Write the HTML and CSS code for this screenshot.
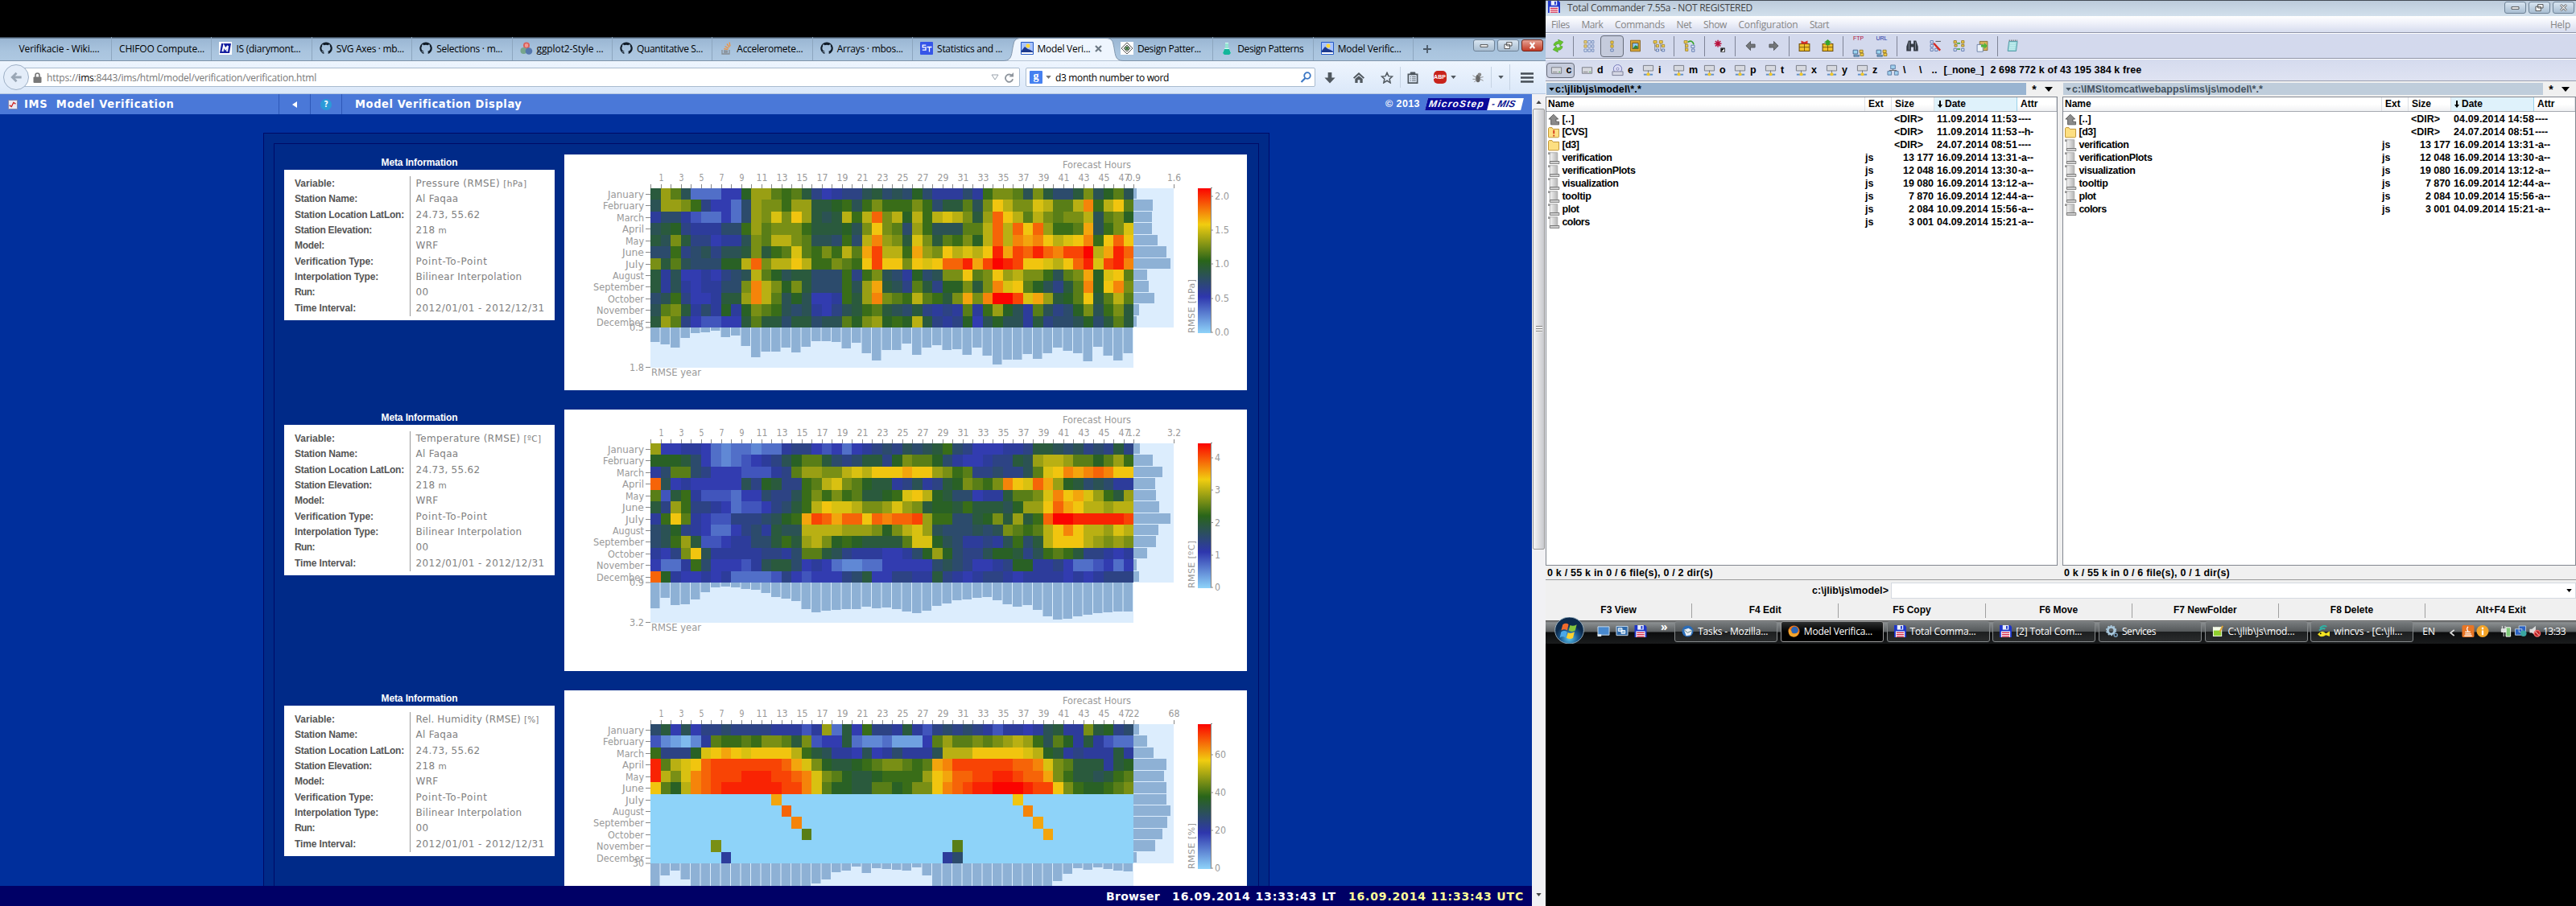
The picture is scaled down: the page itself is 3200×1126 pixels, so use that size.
FILE: index.html
```html
<!DOCTYPE html>
<html lang="en">
<head>
<meta charset="utf-8">
<title>IMS Model Verification</title>
<link rel="stylesheet" href="styles.css">
</head>
<body>
<svg class="defs" aria-hidden="true">
  <defs>
    <linearGradient id="scale" x1="0" y1="1" x2="0" y2="0">
      <stop offset="0" stop-color="#8ed3f9"/><stop offset=".25" stop-color="#2e36ad"/>
      <stop offset=".5" stop-color="#296519"/><stop offset=".75" stop-color="#f1cd10"/><stop offset="1" stop-color="#fb0300"/>
    </linearGradient>
    <linearGradient id="grey" x2="1"><stop stop-color="#f5f5f5"/><stop offset="1" stop-color="#b5b5b5"/></linearGradient>
    <radialGradient id="orb" cy=".8"><stop stop-color="#5fc8ee"/><stop offset=".6" stop-color="#1c5c93"/><stop offset="1" stop-color="#0c2a4c"/></radialGradient>
    <symbol id="github" viewBox="0 0 16 16"><path fill="#111c28" fill-rule="evenodd" d="M8 .5a7.5 7.5 0 0 0-2.6 14.6V13c-2 .4-2.700-.9-3-1.600 1.200 0 1.300 1 2 1 .5 0 .9-.2 1.100-.9C3.500 11.200 2.400 9.900 2.400 7.700c0-1 .3-1.600.8-2.200-.2-.8-.1-1.600.2-2.200.9.1 1.600.5 2.200.9a8 8 0 0 1 4.800 0c.6-.4 1.300-.8 2.200-.9.3.6.4 1.400.2 2.200.5.6.8 1.200.8 2.200 0 2.200-1.100 3.500-3.100 3.800.1.4.2.8.2 1.400v2.200A7.500 7.500 0 0 0 8 .5z"/></symbol>
    <symbol id="ms" viewBox="0 0 16 16"><path fill="#fff" d="M0 0h16v16H0z"/><path fill="#1620a0" d="M3 2h12l-2 12H1z"/><path fill="none" stroke="#fff" stroke-width="2" d="M4.500 12 6 5l2 4 3-4-1 7"/></symbol>
    <symbol id="cubes" viewBox="0 0 16 16"><circle cx="8" cy="4.500" r="4" fill="#d9605b"/><circle cx="4.500" cy="11" r="4" fill="#76a58c"/><circle cx="11" cy="11.500" r="4.300" fill="#5577ad"/><path d="M6 3l2-1 2 1v3L8 7 6 6z" fill="#f19a92"/></symbol>
    <symbol id="stack" viewBox="0 0 16 16"><path d="M3 10v5h9v-5M5 13h5M5 11l5 .4" fill="none" stroke="#858b91" stroke-width="1.300"/><path d="M5.300 8.500l5 1.200M6.500 5.500l4.500 2.600M9 2.500l3 4.200M12 .5l1 5" stroke="#ef9340" stroke-width="1.300"/></symbol>
    <symbol id="st" viewBox="0 0 16 16"><rect width="16" height="16" rx="1" fill="#3555e8"/><path d="M7.300 4.200H3.200v2.600h3.800v3.400H2.800M8.500 6.500h6M11.500 6.500v6" fill="none" stroke="#fff" stroke-width="1.300"/></symbol>
    <symbol id="hill" viewBox="0 0 16 16"><path fill="#a9c4ff" stroke="#2459c4" d="M.5.5h15v15H.5z"/><circle cx="9" cy="5" r="2.500" fill="#ffd83c"/><path fill="#1d3a8e" d="M1 11l4-5 4 3 3 1 3 2v1H1z"/><path fill="#fff" d="M1 13h14v2H1z"/></symbol>
    <symbol id="diamond" viewBox="0 0 16 16"><path fill="#fff" d="M0 0h16v16H0z"/><path d="M8 1l7 7-7 7-7-7zM8 4l4 4-4 4-4-4z" fill="none" stroke="#555"/><circle cx="8" cy="8" r="2.500" fill="#4b7b4b"/></symbol>
    <symbol id="flask" viewBox="0 0 16 16"><path d="M6 1v6l-3 6q0 2 2 2h6q2 0 2-2l-3-6V1" fill="#d8fff4"/><path d="M5 9h6l2 5-2 2H5l-2-2z" fill="#13b69a"/><path d="M6 3h4M6 5h4M6 7h4" stroke="#53c9b2"/></symbol>
    <symbol id="floppy" viewBox="0 0 16 16"><path fill="#1e35c9" d="M0 0h14l2 2v14H0z"/><path fill="#e9eefb" d="M4 0h8v6H4z"/><path fill="#1e35c9" d="M8.500 1h2v4h-2z"/><path fill="#fff" d="M2 8h12v8H2z"/><path d="M3 10h10M3 12.500h10M3 15h10" stroke="#cf2046" stroke-width="1.300"/></symbol>
    <symbol id="up" viewBox="0 0 16 16"><path fill="#8b8b8b" stroke="#555" d="M7.500 1L14 7.500h-3V11h4v4H4V7.500H1z"/></symbol>
    <symbol id="dir" viewBox="0 0 16 16"><path fill="#fddf81" stroke="#b98a25" d="M.5 14V2.500l1-1h4l1.500 2h8V14l-1 1h-13z"/></symbol>
    <symbol id="warn" viewBox="0 0 16 16"><use href="#dir"/><path d="M8 5v5M8 11.500v2" stroke="#d3341a" stroke-width="2"/></symbol>
    <symbol id="js" viewBox="0 0 16 16"><path fill="url(#grey)" stroke="#aaa" d="M2.500.5h10.500v12H2.500z"/><path fill="#999" d="M0 0h3v3H0z"/><path fill="#ddd" stroke="#666" d="M2.500 12.500h13v3h-13z"/></symbol>
    <symbol id="tree1" viewBox="0 0 20 20"><g fill="#f0d57c" stroke="#8a6d16" stroke-width=".7"><path d="M3 2h4v4H3zM3 8.500h4v4H3z"/></g><g fill="#dfe7f4" stroke="#4664a5" stroke-width=".8"><path d="M9 2h4v4H9zM15 2h3v4h-3zM9 8.500h4v4H9zM3 15h4v4H3zM9 15h4v4H9zM15 8.500h3v4h-3zM15 15h3v4h-3z"/></g></symbol>
    <symbol id="tree2" viewBox="0 0 20 20"><g fill="#f2cd45" stroke="#8a6d16" stroke-width=".8"><path d="M8 2.500h4v4H8zM8 8.500h4v4H8z"/></g><path d="M8 15h4v3.500H8z" fill="#dfe7f4" stroke="#4664a5"/></symbol>
    <symbol id="pic" viewBox="0 0 20 20"><path fill="#d8a635" stroke="#7a5510" d="M2.500 1.500h15v17h-15z"/><path fill="#8cc6ef" stroke="#5b3f0c" d="M5.500 5.500h9v9h-9z"/><path fill="#2e8934" d="M6 14l4-5 4 2v3z"/></symbol>
    <symbol id="tree3" viewBox="0 0 20 20"><path d="M4 5v12h3M13 5v12h3M4 10h3M13 10h3" fill="none" stroke="#777"/><g fill="#f2cd45" stroke="#8a6d16" stroke-width=".8"><path d="M2 2h5v4H2zM11 2h5v4h-5zM6 8h4v4H6zM15 8h4v4h-4z"/></g><path d="M6 15h4v3.500H6zM15 15h4v3.500h-4z" fill="#dfe7f4" stroke="#4664a5"/></symbol>
    <symbol id="swap" viewBox="0 0 20 20"><path d="M4 4v13M4 10h4" fill="none" stroke="#777"/><path d="M2 2h5v4H2zM4 8h4v4H4zM4 14h4v4H4z" fill="#f2cd45" stroke="#8a6d16" stroke-width=".8"/><path d="M13 9h5v4h-5zM14 15h4v4h-4z" fill="#dfe7f4" stroke="#4664a5"/><path d="M8 4q7-4 9 4" fill="none" stroke="#37a32c" stroke-width="2"/></symbol>
    <symbol id="star8" viewBox="0 0 20 20"><path d="M7 1v11M1.500 6.500h11M3 2.500l8 8M11 2.500l-8 8" stroke="#b8123f" stroke-width="2"/><path fill="#fff" stroke="#111" d="M11.500 13.500h6v6h-6z"/><path d="M12 14h5l-5 5z"/></symbol>
    <symbol id="left" viewBox="0 0 20 20"><path fill="#737679" stroke="#4b4e50" d="M3 10l7-7v4.500h7v5h-7V17z"/></symbol>
    <symbol id="box" viewBox="0 0 20 20"><path fill="#efc12d" stroke="#6d4c08" stroke-width="1.300" d="M2 7h16v11H2z"/><path d="M2 12h16M10 7v11" stroke="#6d4c08"/></symbol>
    <symbol id="pack" viewBox="0 0 20 20"><use href="#box"/><path fill="#d5322b" d="M5 2l5 2 5-2v5H5z"/></symbol>
    <symbol id="unpack" viewBox="0 0 20 20"><use href="#box"/><path fill="#37a32c" d="M10 0l6 5h-3v4H7V5H4z"/></symbol>
    <symbol id="pcs" viewBox="0 0 20 20"><g fill="#9bd4ef" stroke="#31527c"><path d="M2 9h7v6H2zM3 17h8v2H3z"/></g><path d="M12 9h5v4h-5zM13 14h5v4h-5z" fill="#f2cd45" stroke="#8a6d16"/></symbol>
    <symbol id="binoc" viewBox="0 0 20 20"><path fill="#353b45" d="M4 2h4v5h4V2h4l3 9v7h-7v-6H8v6H1v-7z"/><path stroke="#8f98a6" d="M5 4v12M15 4v12"/></symbol>
    <symbol id="ren" viewBox="0 0 20 20"><path d="M2 2h4v4H2zM2 8h4v4H2zM2 14h4v4H2zM9 14h4v4H9z" fill="#dfe7f4" stroke="#4664a5"/><path d="M7 6l10 11" stroke="#d42a22" stroke-width="3"/><path d="M10 3h8" stroke="#333"/></symbol>
    <symbol id="sync" viewBox="0 0 20 20"><path d="M2 2h4v4H2zM14 2h4v4h-4zM3 8h4v3H3zM14 8h4v3h-4z" fill="#f2cd45" stroke="#8a6d16"/><path d="M7 6h5M12 15H7" stroke="#37a32c" stroke-width="2"/><path d="M2 14h4v4H2zM14 14h4v4h-4z" fill="#dfe7f4" stroke="#4664a5"/></symbol>
    <symbol id="paste" viewBox="0 0 20 20"><path d="M6 3h12v14H6z" fill="#d8b158" stroke="#7a5d1e"/><path d="M2 8h9v11H2z" fill="#edf3fb" stroke="#5c719b"/><path d="M8 8h5V5l5 5-5 5v-3H8z" fill="#50b53d"/></symbol>
    <symbol id="note" viewBox="0 0 20 20"><path d="M4 3h13l-2 15H2z" fill="#9edbdd" stroke="#3c8b97"/><path d="M5 6h9M5 9h9M4.500 12h9M4 15h9" stroke="#e7ffff"/><path d="M4 1.500h13" stroke="#777" stroke-width="2" stroke-dasharray="1.500"/></symbol>
    <symbol id="cycle" viewBox="0 0 20 20"><path d="M3 9q1-6 8-6l-1-3 8 4-5 6-.8-3Q7 6 6 10zM17 11q-1 6-8 6l1 3-8-4 5-6 .8 3q5.200 1 6.200-3z" fill="#66c62b" stroke="#348c14" stroke-width=".6"/></symbol>
    <symbol id="hdd" viewBox="0 0 16 16"><path d="M1.500 4h13v8h-13z" fill="#d7d9df" stroke="#777b84"/><path d="M3 10h6" stroke="#888"/><path d="M11 10h2" stroke="#3aa33a"/></symbol>
    <symbol id="cd" viewBox="0 0 16 16"><circle cx="8" cy="6" r="5.500" fill="#dcdcf5" stroke="#7277b5"/><circle cx="8" cy="6" r="1.500" fill="#fff" stroke="#7277b5"/><path d="M1 9.500h14v5H1z" fill="#d5d7e4" stroke="#777b94"/></symbol>
    <symbol id="netd" viewBox="0 0 16 16"><path d="M1.500 1.500h13v7h-13z" fill="#d7d9df" stroke="#777b84"/><path d="M8 8v5" stroke="#777"/><path d="M2 13.500h12" stroke="#5d8ec9" stroke-width="2"/><circle cx="8" cy="13" r="2.200" fill="#f0c72c"/></symbol>
    <symbol id="net" viewBox="0 0 16 16"><path d="M5 1h6v5H5zM1 9h5v5H1zM10 9h5v5h-5z" fill="#9fd0ee" stroke="#5c7ba3"/><path d="M8 6v2M3 8h10" stroke="#666"/></symbol>
    <symbol id="chev" viewBox="0 0 10 6"><path d="M0 0h10L5 6z"/></symbol>
    <symbol id="tb" viewBox="0 0 16 16"><circle cx="8" cy="8" r="7.500" fill="#2a6cb8"/><path d="M3 6l6-2 5 3-2 6-6 1z" fill="#e8eef5"/><path d="M3 6l5 4 6-3" fill="none" stroke="#577"/></symbol>
    <symbol id="fox" viewBox="0 0 16 16"><circle cx="8" cy="8" r="7.500" fill="#ec7419"/><circle cx="9" cy="6.500" r="4.700" fill="#2c65b4"/><path d="M1 5q4 1 4 5 4 3 9-1-1 7-7 6.500Q0 15 1 5" fill="#f3a62d"/></symbol>
    <symbol id="gear" viewBox="0 0 16 16"><circle cx="7" cy="7" r="4.500" fill="none" stroke="#a9c8dd" stroke-width="3" /><circle cx="7" cy="7" r="6.300" fill="none" stroke="#a9c8dd" stroke-width="1.500" stroke-dasharray="2"/><circle cx="13" cy="13" r="2.200" fill="none" stroke="#7ba0bd" stroke-width="1.500"/></symbol>
    <symbol id="npp" viewBox="0 0 16 16"><path d="M1 2h12v13H1z" fill="#f5fbe8"/><path d="M2 7h10v7H2z" fill="#8fcf2e"/><path d="M2 2h10" stroke="#555" stroke-dasharray="1"/><path d="M14 1l-4 8" stroke="#e0a32e" stroke-width="2"/></symbol>
    <symbol id="fish" viewBox="0 0 16 16"><path d="M3 4q5-5 9-2M2 7q5-4 8-2" fill="none" stroke="#2fb2a5" stroke-width="2"/><path d="M0 12q6-7 11-1l5-3v7l-5-2q-6 5-11-1" fill="#f4e322"/><circle cx="4" cy="11" r="1"/></symbol>
  </defs>
</svg>

<section class="browser">
  <div class="tabs" id="tabs"></div>
  <div class="caption">
    <span class="cap"><svg viewBox="0 0 14 10"><path d="M2 4h10v3H2z" fill="#fff" stroke="#444"/></svg></span>
    <span class="cap"><svg viewBox="0 0 14 10"><path d="M5 .5h7v5H5zM2 3.500h7v6H2z" fill="#fff" stroke="#444"/></svg></span>
    <span class="cap red"><svg viewBox="0 0 14 10"><path d="M4 1l6 8M10 1L4 9" stroke="#fff" stroke-width="2.500"/></svg></span>
  </div>
  <div class="navbar">
    <div class="back"><svg viewBox="0 0 16 16"><path d="M8 2L2 8l6 6M2.500 8H15" fill="none" stroke="#9aa7b6" stroke-width="3.200"/></svg></div>
    <div class="url">
      <svg class="lock" viewBox="0 0 10 13"><path d="M2.500 6V3.500a2.500 2.500 0 0 1 5 0V6" fill="none" stroke="#777" stroke-width="1.600"/><rect y="5.500" width="10" height="7.500" rx="1" fill="#777"/></svg>
      <span class="addr" data-fit="335">https://<b>ims</b>:8443/ims/html/model/verification/verification.html</span>
      <svg class="tri" viewBox="0 0 10 8"><path d="M1 1h8L5 7z" fill="#fff" stroke="#9aa3ad"/></svg>
      <svg class="reload" viewBox="0 0 14 14"><path d="M11 4.500A5 5 0 1 0 12 9" fill="none" stroke="#8f969e" stroke-width="2"/><path d="M13 0v6H7z" fill="#8f969e"/></svg>
    </div>
    <div class="search">
      <span class="g">g</span><svg class="mini" viewBox="0 0 10 6"><use href="#chev" fill="#777"/></svg>
      <span class="q" data-fit="141">d3 month number to word</span>
      <svg class="glass" viewBox="0 0 14 14"><circle cx="9" cy="5" r="3.800" fill="none" stroke="#3b77c4" stroke-width="1.800"/><path d="M6.500 8L1.500 13" stroke="#3b77c4" stroke-width="2.200"/></svg>
    </div>
    <div class="tool w36"><svg viewBox="0 0 16 16"><path d="M5.500 1h5v7H15l-7 7.500L1 8h4.500z"/></svg></div>
    <div class="tool w36"><svg viewBox="0 0 16 16"><path d="M8 1l7.500 7-1.500 1.300-6-5.400-6 5.400L.5 8z"/><path d="M3 9.500l5-4 5 4V15H9.500v-4h-3v4H3z"/></svg></div>
    <div class="tool w33"><svg viewBox="0 0 16 16"><path d="M8 1.500l2 4.500 5 .5-3.700 3.300 1.100 5L8 12l-4.400 2.800 1.100-5L1 6.500 6 6z" fill="none" stroke="#50585f" stroke-width="1.600"/></svg></div>
    <div class="tool w30 line"><svg viewBox="0 0 16 16"><path d="M2 3.500h12v11.500H2z" fill="none" stroke="#50585f" stroke-width="1.800"/><path d="M5 1h6v3H5zM4.500 7h1.500M7 7h5M4.500 9.500h1.500M7 9.500h5M4.500 12h1.500M7 12h5" stroke="#50585f"/></svg></div>
    <div class="tool w48"><span class="abp">ABP</span><svg class="mini" viewBox="0 0 10 6"><use href="#chev"/></svg></div>
    <div class="tool w34"><svg viewBox="0 0 16 16"><ellipse cx="8" cy="9" rx="3" ry="5" fill="#666"/><circle cx="10" cy="4" r="2.500" fill="#888"/><path d="M1 5l5 3M1 10h5M3 14l3-3M15 7l-4 1M15 12l-4-2" stroke="#888"/></svg></div>
    <div class="tool w23 line"><svg class="mini" viewBox="0 0 10 6"><use href="#chev"/></svg></div>
    <div class="tool w43 line tall"><svg viewBox="0 0 16 14"><path d="M0 2h16M0 7h16M0 12h16" stroke="#454d55" stroke-width="2.600"/></svg></div>
  </div>
  <div class="page">
    <div class="app">
      <header class="apphead">
        <div class="brand"><svg viewBox="0 0 14 14"><path fill="#e8e8f2" stroke="#777ba4" d="M.5.5h13v13H.5z"/><path d="M2 8l3 2 3-6 3 2" fill="none" stroke="#c22" stroke-width="1.500"/></svg><b data-fit="186">IMS&nbsp; Model Verification</b></div>
        <div class="hbtn"><svg viewBox="0 0 6 8"><path d="M6 0v8L0 4z" fill="#fff"/></svg></div>
        <div class="hbtn"><span class="help">?</span></div>
        <b class="htitle" data-fit="207">Model Verification Display</b>
        <b class="copy" data-fit="43">© 2013</b>
        <div class="logo"><span><i data-fit="71">MicroStep</i></span><em data-fit="33">- MIS</em></div>
      </header>
      <main class="scene"><div class="outer"><div class="inner" id="rows"></div></div></main>
      <footer class="status"><b data-fit="67">Browser</b><b data-fit="204">16.09.2014 13:33:43 LT</b><b class="utc" data-fit="218">16.09.2014 11:33:43 UTC</b></footer>
    </div>
    <div class="scroll"><svg viewBox="0 0 8 5"><path d="M0 5h8L4 0z" fill="#444"/></svg><div class="thumb"><i></i></div><svg viewBox="0 0 8 5"><path d="M0 0h8L4 5z" fill="#444"/></svg></div>
  </div>
</section>

<section class="tc">
  <div class="tctitle"><svg><use href="#floppy"/></svg><span data-fit="230">Total Commander 7.55a - NOT REGISTERED</span>
    <div class="wb"><span class="cap"><svg viewBox="0 0 14 10"><path d="M2 4h10v3H2z" fill="#fff" stroke="#444"/></svg></span><span class="cap"><svg viewBox="0 0 14 10"><path d="M5 .5h7v5H5zM2 3.500h7v6H2z" fill="#fff" stroke="#444"/></svg></span><span class="cap"><svg viewBox="0 0 14 10"><path d="M3 1l8 8M11 1L3 9" stroke="#555" stroke-width="3"/><path d="M3 1l8 8M11 1L3 9" stroke="#fff" stroke-width="1.300"/></svg></span></div>
  </div>
  <nav class="tcmenu"><span data-fit="23">Files</span><span data-fit="27">Mark</span><span data-fit="62">Commands</span><span data-fit="19">Net</span><span data-fit="29">Show</span><span data-fit="74">Configuration</span><span data-fit="24">Start</span><span class="end" data-fit="25">Help</span></nav>
  <div class="tcbar" id="tcbar"></div>
  <div class="drives" id="drives"></div>
  <div class="panels" id="panels"></div>
  <div class="sums"><span data-fit="206">0 k / 55 k in 0 / 6 file(s), 0 / 2 dir(s)</span><span data-fit="206">0 k / 55 k in 0 / 6 file(s), 0 / 1 dir(s)</span></div>
  <div class="cmd"><label data-fit="95">c:\jlib\js\model&gt;</label><div class="field"><svg viewBox="0 0 10 6"><use href="#chev"/></svg></div></div>
  <div class="fkeys"><span>F3 View</span><span>F4 Edit</span><span>F5 Copy</span><span>F6 Move</span><span>F7 NewFolder</span><span>F8 Delete</span><span>Alt+F4 Exit</span></div>
  <div class="taskbar">
    <svg class="orb" viewBox="0 0 40 36"><ellipse cx="20" cy="18" rx="19.500" ry="18" fill="url(#orb)" stroke="#9db5c3"/><path d="M11 10q5-3 8 0l-2 8q-4-3-8 0z" fill="#ee6a2c"/><path d="M21 11q4 2 9-1l-2 8q-4 3-9 0z" fill="#84c43c"/><path d="M9 20q4-3 8 0l-2 8q-4-3-8 0z" fill="#4aa8e8"/><path d="M18 21q4 2 9-1l-2 8q-4 3-9 0z" fill="#fbd12e"/></svg>
    <div class="quick"><svg viewBox="0 0 16 16"><path d="M.5 2h15v11H.5z" fill="#4889cf" stroke="#cfe0f0"/><path d="M0 12h5v3H0z" fill="#dfe8f0"/></svg><svg viewBox="0 0 16 16"><path d="M.5 1.500h15v12H.5z" fill="#2d68a8" stroke="#cfe0f0"/><path d="M3 4h5v4H3zM7 7h5v4H7z" fill="#8fb9de" stroke="#fff"/></svg><svg><use href="#floppy"/></svg><b>»</b></div>
    <div class="tasks" id="tasks"></div>
    <div class="tray"><span>EN</span><svg class="ar" viewBox="0 0 8 10"><path d="M7 1L2 5l5 4" fill="none" stroke="#ddd" stroke-width="2"/></svg>
      <svg viewBox="0 0 16 16"><rect width="16" height="16" rx="2" fill="#e77525"/><path d="M4 9h7M4 11.500h8M3 14h10M8 2q-3 3 0 6" fill="none" stroke="#fff" stroke-width="1.300"/></svg>
      <svg viewBox="0 0 16 16"><circle cx="8" cy="8" r="8" fill="#f4a428"/><path d="M8 3v2.500M8 7v6" stroke="#fff" stroke-width="2.400"/></svg>
      <svg class="gap" viewBox="0 0 16 16"><path d="M8 3h6v12H8z" fill="#7ec878" stroke="#fff"/><path d="M3 1v4M7 1v4M2 5h6v4H2zM5 9v6" fill="#ddd" stroke="#eee"/></svg>
      <svg viewBox="0 0 16 16"><path d="M6 1h9v8H6zM1 5h9v8H1z" fill="#2b62c4" stroke="#bcd"/><circle cx="12" cy="11" r="4" fill="#3aa5a0"/></svg>
      <svg viewBox="0 0 16 16"><path d="M1 5h3l5-4v13L4 10H1z" fill="#ddd"/><circle cx="11" cy="11" r="4" fill="#b22" stroke="#e66" stroke-width="1.500"/><path d="M8.500 8.500l5 5" stroke="#fff"/></svg>
      <span class="clock" data-fit="28">13:33</span></div>
  </div>
</section>
<script src="app.js"></script>
</body>
</html>
```
FILE: styles.css
```css
* { box-sizing: border-box; }
html, body { margin: 0; width: 3200px; height: 1126px; overflow: hidden; background: #000; }
body { position: relative; font: 12px "Open Sans", "Noto Sans", sans-serif; color: #000; }
svg { display: block; flex: none; }
.defs { position: absolute; width: 0; height: 0; }
[data-fit] { white-space: pre; flex: none; }

/* Browser window */
.browser { position: absolute; left: 0; top: 46px; width: 1920px; height: 1080px; display: flex; flex-direction: column; overflow: hidden; }
.tabs { height: 30px; flex: none; padding-left: 14.6px; display: flex; background: linear-gradient(#3c4a5a 0, #3c4a5a 1px, #9ab6d3 2px, #a9c4de 60%, #aec8e1); border-bottom: 1px solid #7e93a9; }
.tab { position: relative; width: 124.4px; height: 29px; padding: 0 0 1px 9px; display: flex; align-items: center; gap: 5px; border-right: 1px solid #8da6bf; }
.tab svg { width: 16px; height: 16px; }
.tab span { position: relative; }
.tab.on { border-color: transparent; z-index: 1; }
.tab.before { border-color: transparent; }
.tab .shape { position: absolute; left: -12px; top: 1px; width: 148px; height: 29px; }
.tab.on > svg:not(.shape) { position: relative; }
.tab .x { width: 9px; height: 9px; }
.plus { width: 34px; display: grid; place-items: center; }
.plus svg { width: 12px; height: 12px; }
.caption { position: absolute; right: 3px; top: 3px; display: flex; gap: 3px; }
.cap { width: 27px; height: 15px; border: 1px solid #6e8296; border-radius: 3px; display: grid; place-items: center; background: linear-gradient(#d8e5f1, #a9bed2); }
.cap svg { width: 13px; height: 9px; }
.cap.red { background: linear-gradient(#e6a294, #c23a26); border-color: #702518; }
.navbar { height: 41px; flex: none; display: flex; align-items: center; background: linear-gradient(#eef5fe, #dbe8f9); border-bottom: 1px solid #b5c8e1; padding-left: 4px; }
.back { position: relative; z-index: 1; width: 32px; height: 32px; margin-right: -12px; border-radius: 50%; border: 1px solid #9eb0c6; background: #e4edf9; display: grid; place-items: center; }
.back svg { width: 15px; height: 14px; }
.url, .search { height: 24px; background: #fff; border: 1px solid #a9bbcf; display: flex; align-items: center; border-radius: 2px; }
.url { width: 1243px; padding: 0 6px 0 16px; color: #777; }
.url b { font-weight: 400; color: #000; }
.lock { width: 11px; height: 13px; margin-right: 6px; }
.tri { width: 10px; height: 8px; margin-left: auto; }
.reload { width: 13px; height: 13px; margin-left: 6px; }
.search { width: 360px; margin-left: 7px; padding: 0 4px; gap: 4px; }
.g { width: 16px; height: 16px; background: #4580f0; color: #fff; font: 700 14px/13px "Liberation Serif", serif; text-align: center; border-radius: 1px; }
.q { margin-left: 1px; }
.mini { width: 7px; height: 4px; }
.glass { width: 14px; height: 14px; margin-left: auto; }
.tool { height: 26px; display: flex; align-items: center; justify-content: center; gap: 5px; fill: #50585f; }
.tool > svg:not(.mini) { width: 16px; height: 15px; }
.w36 { width: 36px; } .w33 { width: 33px; } .w30 { width: 31px; } .w48 { width: 49px; } .w34 { width: 33px; } .w23 { width: 23px; } .w43 { width: 43px; }
.line { border-left: 1px solid #c6d3e3; }
.tall { height: 32px; }
.abp { width: 16px; height: 16px; border-radius: 5px; background: #c8231c; color: #fff; font: 700 7px/16px "Liberation Sans", sans-serif; text-align: center; }
.page { flex: 1; min-height: 0; display: flex; }
.app { width: 1903px; display: flex; flex-direction: column; min-height: 0; }
.apphead { height: 25px; flex: none; background: #4a78d8; color: #fff; display: flex; align-items: stretch; font: 700 14.500px/25px "DejaVu Sans Condensed", "DejaVu Sans", sans-serif; font-stretch: condensed; }
.brand { width: 346px; display: flex; align-items: center; gap: 7px; padding-left: 9px; }
.brand svg { width: 14px; height: 12px; }
.hbtn { width: 39px; border-left: 1px solid #2e58b8; display: grid; place-items: center; }
.hbtn svg { width: 6px; height: 8px; }
.help { width: 14px; height: 14px; border-radius: 50%; background: #2b9ad8; font-size: 10px; line-height: 14px; text-align: center; }
.htitle { border-left: 1px solid #2e58b8; padding-left: 16px; }
.copy { margin-left: auto; font: 700 12.500px/25px "Liberation Sans", sans-serif; }
.logo { align-self: center; display: flex; height: 15px; width: 119px; margin: -1px 12px 0 8px; transform: skewX(-14deg); background: #fff; font: italic 700 12px/15px "Liberation Sans", sans-serif; color: #0b1590; }
.logo span { background: #0a0a9a; color: #fff; width: 77px; padding-left: 3px; flex: none; }
.logo i { transform: skewX(6deg); display: inline-block; }
.logo em { padding-left: 4px; }
.scene { flex: 1; min-height: 0; overflow: hidden; background: #002f9c; padding: 23px 0 0 327px; }
.outer { width: 1250px; border: 1px solid #000a66; background: #002a88; padding: 12px; }
.inner { border: 1px solid #000a66; padding: 13px 0 60px 12px; display: grid; gap: 24px; }
.row { display: grid; grid-template-columns: 336px 848px; column-gap: 12px; align-items: start; }
.meta h2 { margin: 0; height: 19px; font: 700 12px/20px "Liberation Sans", sans-serif; color: #fff; text-align: center; }
.meta dl { margin: 0; height: 187px; background: #fff; padding: 8px 13px 5px; display: grid; grid-template-columns: 143.500px 1fr; grid-auto-rows: 19.330px; align-items: center; }
.meta dt { font: 700 12px/19.330px "Liberation Sans", sans-serif; color: #555; border-right: 1px solid #999; white-space: nowrap; }
.meta dd { margin: 0; padding-left: 7px; font: 12px/19.330px "DejaVu Sans", sans-serif; color: #808080; white-space: nowrap; }
.meta dd small { font-size: 10.500px; }
.chart { background: #fff; width: 848px; }
.chart text { font: 11.500px "DejaVu Sans Condensed", "DejaVu Sans", sans-serif; font-stretch: condensed; fill: #999; }
.chart .vert { font-family: "DejaVu Sans", sans-serif; font-stretch: normal; font-size: 11px; }
.chart path { stroke: #888; fill: none; }
.status { height: 25px; flex: none; background: #000066; color: #fff; display: flex; align-items: center; justify-content: flex-end; gap: 15px; padding-right: 10px; font: 700 14px "DejaVu Sans", sans-serif; }
.utc { color: #ffff99; }
.scroll { width: 17px; background: #f1f1f4; display: flex; flex-direction: column; align-items: center; padding: 8px 1px 12px; }
.scroll svg { width: 7px; height: 4px; }
.scroll .thumb { width: 15px; height: 548px; margin-top: 6px; margin-bottom: auto; border: 1px solid #999; border-radius: 2px; background: linear-gradient(90deg, #f4f4f5, #c9cace); display: grid; place-items: center; }
.thumb i { width: 8px; height: 8px; background: repeating-linear-gradient(#888 0 1px, #eee 1px 3px); }

/* File manager */
.tc { position: absolute; left: 1920px; top: 0; width: 1280px; height: 800px; background: #f0f0f0; display: flex; flex-direction: column; font: 700 12.500px "Liberation Sans", sans-serif; }
.tc > div, .tc > nav { flex: none; }
.tctitle { height: 20px; border-top: 1px solid #444b55; background: linear-gradient(#bccbdb, #d2e0ec); display: flex; align-items: center; padding: 0 2px 2px; gap: 9px; font: 12px "Open Sans", sans-serif; color: #444; }
.tctitle > svg { width: 15px; height: 15px; margin: -2px 0 0 1px; }
.wb { margin-left: auto; display: flex; gap: 3px; }
.tcmenu { height: 21px; background: linear-gradient(#fff, #f0f2fa 40%, #d6dcee); border-bottom: 1px solid #8f94a8; display: flex; align-items: center; padding: 0 7px; gap: 14.500px; font: 12px "Open Sans", sans-serif; color: #858585; }
.tcmenu .end { margin-left: auto; }
.tcbar { height: 32px; border-top: 1px solid #fff; border-bottom: 1px solid #8f94a8; background: #d3d9ed; display: flex; align-items: center; padding-left: 1px; }
.tcbar .ic { width: 29px; height: 27px; display: grid; place-items: center; }
.tcbar .ic svg { width: 17px; height: 16px; }
.tcbar .flip svg { transform: scaleX(-1); }
.tcbar .lbl { position: relative; align-items: end; }
.tcbar .lbl b { position: absolute; top: 0; left: 0; right: 0; text-align: center; font: 7px/8px "Liberation Sans", sans-serif; color: #b01030; }
.tcbar .lbl.blue b { color: #2030a0; }
.tcbar .sep { width: 9px; height: 25px; display: flex; justify-content: center; }
.tcbar .sep::after { content: ""; width: 1px; background: #7f8496; }
.pressed { border: 1.500px solid #666c7a; border-radius: 4px; background: #c5cbdc; }
.drives { height: 28px; border-top: 1px solid #fff; border-bottom: 1px solid #9a9fb0; background: linear-gradient(#d5dbee, #dfe3f2); display: flex; align-items: center; padding-left: 1px; }
.drive { width: 38px; height: 19px; display: flex; align-items: center; gap: 5px; padding-left: 5px; }
.drive.pressed { width: 35px; margin-right: 3px; padding-left: 3.500px; }
.drive svg { width: 15px; height: 15px; }
.drives .t { white-space: pre; }
.panels { height: 602px; padding-top: 2px; display: grid; grid-template-columns: 636px 638px; gap: 6px; }
.panel { display: flex; flex-direction: column; min-height: 0; }
.path { height: 15px; display: flex; align-items: center; margin: 0 0 2px 1px; }
.path div { width: 596px; height: 15px; background: #99b4d1; display: flex; align-items: center; gap: 1px; padding-left: 3px; }
.path.off div { background: #bfcddb; color: #44525f; fill: #44525f; }
.path b { width: 20px; text-align: center; font-size: 14px; }
.path .big { width: 10px; height: 6px; margin-left: 3px; }
.list { flex: 1; background: #fff; border: 1px solid #828790; }
.lrow, .lhead { display: grid; grid-template-columns: 396px 33px 53px 103px 1fr; height: 16px; align-items: center; white-space: pre; }
.lhead { height: 18px; background: linear-gradient(#fff 50%, #f0f1f3); border-bottom: 1px solid #a5a9b0; margin-bottom: 1px; }
.lhead span { height: 17px; line-height: 17px; padding-left: 4px; border-right: 1px solid #dde0e5; display: flex; align-items: center; gap: 3px; font-size: 12px; }
.lhead span:first-child { padding-left: 2px; }
.lhead .sort { background: #dff2fb; border-color: #9ad2ea; }
.sort svg { width: 6px; height: 9px; }
.lrow .n { display: flex; align-items: center; gap: 3px; padding-left: 2px; }
.lrow .n svg { width: 14.500px; height: 15px; }
.lrow .s { text-align: right; padding-right: 1px; }
.lrow .s.d { text-align: left; padding-left: 3px; }
.lrow .dt { padding-left: 3px; }
.lrow .a { padding-left: 1px; }
.sums { height: 18px; display: grid; grid-template-columns: 642px 1fr; align-items: center; padding-left: 2px; border-bottom: 1px solid #9b9b9b; }
.cmd { height: 23px; margin-top: 1px; display: flex; align-items: center; justify-content: flex-end; gap: 3px; }
.cmd .field { width: 851px; height: 20px; background: #fff; border: 1px solid #d5d9e0; display: flex; align-items: center; justify-content: flex-end; padding-right: 4px; }
.cmd svg { width: 7px; height: 4px; }
.fkeys { height: 25px; margin-top: 1px; display: flex; align-items: center; }
.fkeys span { width: 182.200px; height: 18px; line-height: 17px; text-align: center; border-right: 1px solid #a0a0a0; font-size: 12px; }
.fkeys span:last-child { border: 0; flex: 1; }
.taskbar { height: 29px; display: flex; align-items: center; padding-bottom: 2px; background: linear-gradient(#555 0, #8b8f91 3px, #5a5e60 14px, #0b0c0d 15px, #1a1c1d); color: #fff; font: 12px "Open Sans", sans-serif; }
.orb { width: 41px; height: 33px; margin: -3px 0 0 9px; }
.quick { display: flex; align-items: center; gap: 7px; margin-left: 14px; width: 98px; }
.quick svg { width: 16px; height: 15px; }
.quick b { margin: -12px 0 0 10px; font-size: 14px; }
.tasks { display: flex; gap: 3.700px; }
.task { width: 128px; height: 26px; border: 1px solid #85898b; border-radius: 3px; display: flex; align-items: center; gap: 5px; padding: 0 0 1px 8px; background: linear-gradient(#777b7d, #55595b 48%, #1c1e1f 50%, #2a2c2d); }
.task svg { width: 15px; height: 15px; }
.task.on { background: linear-gradient(#2d2f30, #000 50%); border-color: #999; }
.tray { flex: 1; display: flex; align-items: center; gap: 2px; padding: 0 13px 1px 11px; }
.tray svg { width: 16px; height: 15px; }
.tray .ar { width: 8px; height: 9px; margin: 4px 6px 0 15px; }
.tray .gap { margin-left: 11px; }
.clock { margin-left: auto; }
```
FILE: app.js
```js
const icon = id => `<svg><use href="#${id}"/></svg>`;
const $ = id => document.getElementById(id);

/* Browser tabs: icon, title, width of the title */
const tabs = [
  ['', 'Verifikacie - Wiki....', 100], ['', 'CHIFOO Compute...', 106], ['ms', 'IS (diarymont...', 80],
  ['github', 'SVG Axes · mb...', 84], ['github', 'Selections · m...', 82], ['cubes', 'ggplot2-Style ...', 83],
  ['github', 'Quantitative S...', 82], ['stack', 'Acceleromete...', 82], ['github', 'Arrays · mbos...', 82],
  ['st', 'Statistics and ...', 81], ['hill', 'Model Veri...', 66], ['diamond', 'Design Patter...', 79],
  ['flask', 'Design Patterns', 82], ['hill', 'Model Verific...', 79]
];
$('tabs').innerHTML = tabs.map(([ic, t, w], i) => `<div class="tab${i === 10 ? ' on' : i === 9 ? ' before' : ''}">${
  i === 10 ? '<svg class="shape" viewBox="0 0 148 29" preserveAspectRatio="none"><path d="M0 28.500C11 28 9 20 12 8 13 2 16 .5 22 .5H126C132 .5 135 2 136 8 139 20 137 28 148 28.500V29H0z" fill="#eef5fe" stroke="#8297ae"/></svg>' : ''
}${ic ? icon(ic) : ''}<span data-fit="${w}">${t}</span>${
  i === 10 ? '<svg class="x" viewBox="0 0 9 9"><path d="M1 1l7 7M8 1L1 8" stroke="#6d7985" stroke-width="2.200"/></svg>' : ''}</div>`).join('')
  + '<div class="plus"><svg viewBox="0 0 12 12"><path d="M6 1v10M1 6h10" stroke="#4a5866" stroke-width="1.800"/></svg></div>';

/* Model verification: each letter is one hour's error, A (zero) to Z (scale maximum) */
const months = [['January', 45], ['February', 51], ['March', 34], ['April', 27], ['May', 23], ['June', 27], ['July', 23], ['August', 39], ['September', 63], ['October', 45], ['November', 59], ['December', 59]];
const blank = marks => { const a = Array(48).fill('A'); Object.entries(marks).forEach(([k, v]) => a[k] = v); return a.join(''); };
const sets = [
  { v: 'Pressure (RMSE) <small>[hPa]</small>', vw: 138, unit: '[hPa]', len: 67, h: 293, top: ['0.9', '1.6'], bot: ['0.5', '1.8'],
    ticks: [['2.0', 10], ['1.5', 52], ['1.0', 94], ['0.5', 137], ['0.0', 179]],
    rows: ['LQOKEEEGGMQQONOLIGHIIKLJKJMJHHHJHNPPOKPLJJLPKMOK', 'KQQPNIGGEJQPPNQQLLMNKNPNNNPNJLLOKPTRPPSROORVNRTO',
      'HJJHFEEGEJQPSPTQLKLRNRWPRMRNRSRPLQWTRORPOPPRKOPM', 'KLMIHHHJJNQOPPPNLLLMKPTPOJQNKKKOORWRWTWQNNOUKNPS',
      'LKPLIIGHHKPORRPOKKJNJRVQPLSPLONPMRWRVUVTRSTVNTWT', 'JJNIJKIKKLPLNOSONPNROUXRRNUQPTRSRTYUXWYWVXXZRUYW',
      'PLOKJJJMMRWPRRTRNNPONTXTTPTSTWWYUXZYXTTSRTWYSXYV', 'LHKGGHGIJKROMKLLJJJNINPKJHMJKPPTOPTQRPPNKOPUMSTO',
      'LHKHGHHJJPVRPMPLJJJNKQULKIOLIMMPLPVSTOMKILOVMTVP', 'JKNIGGHLLQVROKMKGGHNLQVPONRONLPUPVZZXSUQLMOTLORO',
      'KOPLHJHMHMPONKJKHGIKLNOLKJLIHIHOHNQMKHOKIJMPKNPL', 'LQOIGFFGGLOLLJLLJKKOMPQMNMRLIHIMGKMKKHLIJJKMJLOL'],
    hist: [18,21,25,13,7,6,4,12,10,23,37,30,30,25,31,24,17,17,18,26,19,32,41,28,28,20,34,25,22,28,27,34,25,35,46,40,40,33,39,32,25,29,32,42,24,35,41,32],
    side: [4,24,23,23,30,41,46,17,19,26,7,4] },
  { v: 'Temperature (RMSE) <small>[ºC]</small>', vw: 156, unit: '[ºC]', len: 59, h: 325, top: ['1.2', '3.2'], bot: ['0.9', '3.2'],
    ticks: [['4', 18], ['3', 58], ['2', 98.5], ['1', 139], ['0', 179]],
    rows: ['QGGHHGEDEEDEEHIIGFGEGHIJIKJKLNJIGGGHHILLKJKIJILI', 'MMMLJGEDEFGHIKMOOLJIJLLIMPOOMJHGGHIILKQRRQOOMOQN',
      'HJOOJIGGGFFFHIOQQPPRSRTTTUTTQPNOIIJIIKOSTVUVWVTT', 'WKGHGGGGGKIMLIINORSPOMLLHIKHILMPONPVTSWUQMLJKJHH',
      'OFLNHFFFEGGJIIKNPNPNOLLMNSTRMLJJGHHLOOPSVTUSQNLQ', 'LIQNIIHGEFFGIJLNRTSSRPPQSQPLMMLNLLLKMQQTWUTRRQRR',
      'HNTOHGFFIIIJKMNUXWUWWTWVWWXQNNJJLMPLQLNWZZYYYYYX', 'JKMIHGEEGIJHLKKRRRRQQQPMPRSQKJJJKJKPONORTVTRRQSR',
      'JKNQLFFGHHJJLNLQRPMNMLLLLOSSMKJHHIHKNJLRTTTRQPQP', 'HGIPTKHHHHHIIHJOOLKIHHHGGHJMQMJIIKMMLIKNONLIIHGH',
      'GEEHNJGGGFHKLLJGHGEDDEEGGGGGJKJIGGHIMMHHIGEEFGEG', 'WMHGGHGHEEEEFIGFGGGIJLGGIIHHLIHGHIIHGHHHHGHGHIII'],
    hist: [32,19,28,27,21,12,6,5,6,8,9,13,18,20,23,33,37,35,34,33,33,30,32,31,33,36,38,35,29,26,22,21,19,18,22,27,30,28,34,42,46,45,42,40,38,37,36,36],
    side: [8,24,36,27,28,32,46,31,28,17,4,7] },
  { v: 'Rel. Humidity (RMSE) <small>[%]</small>', vw: 153, unit: '[%]', len: 57, h: 293, top: ['22', '68'], bot: ['30', '90'],
    ticks: [['60', 38], ['40', 85], ['20', 132], ['0', 179]],
    rows: ['JLGKGIIJIIIIHHHFHQELGNIIHLHFIJIJIHFHHGHKLHHPLMIJ', 'FDCBDHONNONPPOLPFGGLEDDECCCGOQOOPOPQRQNKOMHLHFEE',
      'NIIIMSTUTSTTTTRNLKHHGKGHJHHHKRRRTTTTTSRMLHIHHHLH', 'YORSTWXXXXXXXWUSPMLLMNOPPONOUVXXXXXXWWVSPOLLLHLM',
      'YRPSVWXXXYYYXXWVSPOMLLMNNNNQTUWWXXYYXWWUPNLLKLNO', 'TOMRVWXYYYYYYXXVSOMMLLOOMNPPTVWXYYZZZYXXTPNMMNOP',
      blank({ 12: 'U', 36: 'T' }), blank({ 13: 'W', 37: 'V' }), blank({ 14: 'V', 38: 'U' }), blank({ 15: 'O', 39: 'U' }),
      blank({ 6: 'P', 30: 'O' }), blank({ 7: 'H', 29: 'H', 30: 'J' })],
    hist: [45,15,9,20,45,45,45,45,45,45,45,45,45,45,45,45,25,20,11,9,4,12,6,7,8,9,5,15,45,45,45,45,45,45,45,45,45,45,45,45,22,13,6,8,5,7,9,10],
    side: [7,17,25,41,38,41,41,46,42,36,27,4] }
];
const stops = [[142,211,249], [46,54,173], [41,101,25], [241,205,16], [251,3,0]];
const colour = c => {
  const p = (c.charCodeAt(0) - 65) / 25 * 4, i = Math.min(3, Math.floor(p)), f = p - i;
  return `rgb(${stops[i].map((s, k) => Math.round(s + (stops[i + 1][k] - s) * f))})`;
};
const X = 107, Y = 42, CW = 12.5, CH = 173 / 12;

function chart(s, last) {
  const o = [];
  const rect = (x, y, w, h, f) => o.push(`<rect x="${x}" y="${y}" width="${w}" height="${h}" fill="${f}"/>`);
  const text = (x, y, t, a, len) => o.push(`<text x="${x}" y="${y}" text-anchor="${a}" textLength="${len}" lengthAdjust="spacingAndGlyphs">${t}</text>`);
  rect(X + 600, Y, 50, 173, '#dcedfd');
  rect(X, Y + 173, 600, 50, '#dcedfd');
  s.rows.forEach((r, m) => {
    const y = Math.round(Y + m * CH), h = Math.round(Y + (m + 1) * CH) - y;
    [...r].forEach((c, k) => { const x = Math.round(X + k * CW); rect(x, y, Math.round(X + (k + 1) * CW) - x, h, colour(c)); });
    rect(X + 600, y, s.side[m], h - 1, '#8eb1d5');
    text(X - 8, y + 11.5, months[m][0], 'end', months[m][1]);
    o.push(`<path d="M${X - 6} ${y + 7.5}h6"/>`);
  });
  s.hist.forEach((h, k) => rect(X + k * CW, Y + 173, 11.5, h, '#8eb1d5'));
  for (let k = 0; k <= 48; k++) {
    o.push(`<path d="M${Math.round(X + k * CW) + .5} ${Y - 5}v5"/>`);
    if (k % 2) text(X + k * CW + 1, 33, k, 'middle', k > 9 ? 14 : 6);
  }
  o.push(`<path d="M${X + 650.5} ${Y - 5}v5M${X - 6} ${Y + 173}h6M${X - 6} ${Y + 222.500}h6"/>`);
  text(X + 600.5, 33, s.top[0], 'middle', s.top[0].length > 2 ? 17 : 14);
  text(X + 650.5, 33, s.top[1], 'middle', s.top[1].length > 2 ? 17 : 14);
  text(X - 8, Y + 176.5, s.bot[0], 'end', s.bot[0].length > 2 ? 18 : 14);
  /* the last chart runs below the fold before its lower axis labels */
  if (!last) {
    text(X - 8, Y + 226.5, s.bot[1], 'end', 18);
    text(X + 1, Y + 233, 'RMSE year', 'start', 62);
  }
  text(X + 597, 17, 'Forecast Hours', 'end', 85);
  rect(787, Y, 16, 180, 'url(#scale)');
  o.push(`<path d="M803.500 ${Y - .5}v180M803 ${Y - .5}h2"/>`);
  s.ticks.forEach(([t, y]) => { text(808, Y + y + 4, t, 'start', t.length > 2 ? 18 : t.length > 1 ? 14 : 7); o.push(`<path d="M803 ${Y + y}h3"/>`); });
  o.push(`<text class="vert" transform="translate(783 ${Y + 180}) rotate(-90)" textLength="${s.len}">RMSE ${s.unit}</text>`);
  return `<svg class="chart" height="${s.h}" viewBox="0 0 848 ${s.h}">${o.join('')}</svg>`;
}
$('rows').innerHTML = sets.map((s, i) => {
  const meta = [['Variable:', 50, s.v, s.vw], ['Station Name:', 78, 'Al Faqaa', 53], ['Station Location LatLon:', 136, '24.73, 55.62', 80], ['Station Elevation:', 96, '218 <small>m</small>', 38.5],
    ['Model:', 37, 'WRF', 28], ['Verification Type:', 98, 'Point-To-Point', 89], ['Interpolation Type:', 104, 'Bilinear Interpolation', 132], ['Run:', 25, '00', 16], ['Time Interval:', 76, '2012/01/01 - 2012/12/31', 160]];
  return `<section class="row"><div class="meta"><h2><span data-fit="95">Meta Information</span></h2><dl>${meta.map(([k, kw, v, vw]) =>
    `<dt><span data-fit="${kw}">${k}</span></dt><dd><span data-fit="${vw}">${v}</span></dd>`).join('')}</dl></div>${chart(s, i === 2)}</section>`;
}).join('');

/* File manager toolbar; a dash is a separator */
const tools = ['cycle', '-', 'tree1', 'tree2', 'pic', 'tree3', '-', 'swap', '-', 'star8', '-', 'left', 'right', '-', 'pack', 'unpack', '-', 'FTP', 'URL', '-', 'binoc', 'ren', 'sync', 'paste', '-', 'note'];
$('tcbar').innerHTML = tools.map(t => t === '-' ? '<span class="sep"></span>'
  : t === 'FTP' || t === 'URL' ? `<span class="ic lbl${t === 'URL' ? ' blue' : ''}"><b>${t}</b>${icon('pcs')}</span>`
  : `<span class="ic${t === 'tree2' ? ' pressed' : t === 'right' ? ' flip' : ''}">${icon(t === 'right' ? 'left' : t)}</span>`).join('');
$('drives').innerHTML = [...'cdeimoptxyz'].map((d, i) => `<span class="drive${i ? '' : ' pressed'}">${icon(i < 2 ? 'hdd' : i === 2 ? 'cd' : 'netd')}${d}</span>`).join('')
  + `<span class="drive">${icon('net')}\\</span><span class="t" style="margin-left:7px">\\</span><span class="t" style="margin-left:12px">..</span><span class="t" style="margin-left:8px" data-fit="50">[_none_]</span><span class="t" style="margin-left:8px" data-fit="188">2 698 772 k of 43 195 384 k free</span>`;

const files = [['js', 'verification', '13 177', '16.09.2014 13:31', 62], ['js', 'verificationPlots', '12 048', '16.09.2014 13:30', 91], ['js', 'visualization', '19 080', '16.09.2014 13:12', 70],
  ['js', 'tooltip', '7 870', '16.09.2014 12:44', 36], ['js', 'plot', '2 084', '10.09.2014 15:56', 21], ['js', 'colors', '3 001', '04.09.2014 15:21', 34]];
const D = '&lt;DIR&gt;';
const sizeWidth = s => s === D ? 36 : s.length === 6 ? 38 : 31;
const panel = (path, w, off, dirs) => `<div class="panel"><div class="path${off}"><div><svg class="mini" viewBox="0 0 10 6"><use href="#chev"/></svg><span data-fit="${w}">${path}</span></div><b>*</b><svg class="big" viewBox="0 0 10 6"><use href="#chev"/></svg></div>
<div class="list"><div class="lhead"><span>Name</span><span>Ext</span><span>Size</span><span class="sort"><svg viewBox="0 0 6 9"><path d="M2 0h2v5h2L3 9 0 5h2z"/></svg>Date</span><span>Attr</span></div>${
  [...dirs, ...files].map(([ic, n, s, d, nw, a]) => `<div class="lrow"><span class="n">${icon(ic)}<span data-fit="${nw}">${n}</span></span><span>${ic === 'js' ? 'js' : ''}</span><span class="s${ic === 'js' ? '' : ' d'}"><span data-fit="${sizeWidth(s)}">${s}</span></span><span class="dt"><span data-fit="100">${d}</span></span><span class="a"><span data-fit="${a === '----' ? 16 : 19}">${a || '-a--'}</span></span></div>`).join('')}</div></div>`;
$('panels').innerHTML = panel('c:\\jlib\\js\\model\\*.*', 107, '', [['up', '[..]', D, '11.09.2014 11:53', 15, '----'], ['warn', '[CVS]', D, '11.09.2014 11:53', 31, '--h-'], ['dir', '[d3]', D, '24.07.2014 08:51', 21, '----']])
  + panel('c:\\IMS\\tomcat\\webapps\\ims\\js\\model\\*.*', 237, ' off', [['up', '[..]', D, '04.09.2014 14:58', 15, '----'], ['dir', '[d3]', D, '24.07.2014 08:51', 21, '----']]);

$('tasks').innerHTML = [['tb', 'Tasks - Mozilla...', 87], ['fox', 'Model Verifica...', 85], ['floppy', 'Total Comma...', 82], ['floppy', '[2] Total Com...', 82], ['gear', 'Services', 42], ['npp', 'C:\\jlib\\js\\mod...', 83], ['fish', 'wincvs - [C:\\jli...', 85]]
  .map(([i, t, w], k) => `<div class="task${k === 1 ? ' on' : ''}">${icon(i)}<span data-fit="${w}">${t}</span></div>`).join('');

/* Track each label so that it fills the width it was laid out for */
document.querySelectorAll('[data-fit]').forEach(el => {
  const r = document.createRange(); r.selectNodeContents(el);
  const n = el.textContent.length;
  el.style.letterSpacing = ((+el.dataset.fit - r.getBoundingClientRect().width) / n).toFixed(3) + 'px';
});
```
